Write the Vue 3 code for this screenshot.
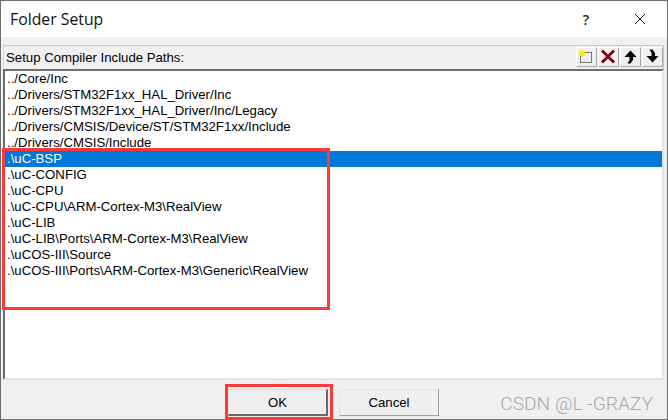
<template>
  <div class="dialog">
    <div class="title-bar">
      <span class="title">Folder Setup</span>
      <span class="help">?</span>
      <svg class="close" width="12" height="12" viewBox="0 0 12 12">
        <path d="M1 1L11 11M11 1L1 11" stroke="#222" stroke-width="1" fill="none" />
      </svg>
    </div>

    <div class="body">
      <div class="group-head">
        <span class="group-label">Setup Compiler Include Paths:</span>
        <div class="tools">
          <button class="tool">
            <svg width="19" height="18" viewBox="0 0 19 18">
              <rect x="3.5" y="4.5" width="11" height="10" fill="none" stroke="#000" stroke-width="1" stroke-dasharray="1 1" />
              <path d="M1.5 5h7M5 1.5v7M2.5 2.5l5 5M7.5 2.5l-5 5" stroke="#f5ee10" stroke-width="1.5" fill="none" />
            </svg>
          </button>
          <button class="tool">
            <svg width="19" height="18" viewBox="0 0 19 18">
              <path d="M3 2.5L15 14.5M15 2.5L3 14.5" stroke="#800000" stroke-width="2.8" fill="none" />
            </svg>
          </button>
          <button class="tool">
            <svg width="19" height="18" viewBox="0 0 19 18">
              <path d="M9.5 2.5L15.5 9H12V12L9.5 15.5H6.5L8.5 12V9H3.5Z" fill="#000" />
            </svg>
          </button>
          <button class="tool">
            <svg width="19" height="18" viewBox="0 0 19 18">
              <path d="M9.5 14.5L15.5 8H12V5L9.5 1.5H6.5L8.5 5V8H3.5Z" fill="#000" />
            </svg>
          </button>
        </div>
      </div>

      <ul class="path-list">
        <li
          v-for="(path, i) in paths"
          :key="path"
          class="path-row"
          :class="{ selected: i === selectedIndex }"
        >{{ path }}</li>
      </ul>

      <div class="footer">
        <button class="btn primary">OK</button>
        <button class="btn">Cancel</button>
      </div>
    </div>

    <span class="watermark">CSDN @L -GRAZY</span>

    <!-- red annotations drawn over the dialog -->
    <div class="mark mark-list"></div>
    <div class="mark mark-ok"></div>
  </div>
</template>

<script setup>
const selectedIndex = 5

const paths = [
  '../Core/Inc',
  '../Drivers/STM32F1xx_HAL_Driver/Inc',
  '../Drivers/STM32F1xx_HAL_Driver/Inc/Legacy',
  '../Drivers/CMSIS/Device/ST/STM32F1xx/Include',
  '../Drivers/CMSIS/Include',
  '.\\uC-BSP',
  '.\\uC-CONFIG',
  '.\\uC-CPU',
  '.\\uC-CPU\\ARM-Cortex-M3\\RealView',
  '.\\uC-LIB',
  '.\\uC-LIB\\Ports\\ARM-Cortex-M3\\RealView',
  '.\\uCOS-III\\Source',
  '.\\uCOS-III\\Ports\\ARM-Cortex-M3\\Generic\\RealView'
]
</script>

<style>
html,
body {
  margin: 0;
  background: #f0f0f0;
}
</style>

<style scoped>
.dialog {
  position: relative;
  box-sizing: border-box;
  width: 668px;
  height: 420px;
  display: flex;
  flex-direction: column;
  border: 1px solid #6e6e6e;
  background: #f0f0f0;
  font-family: "Liberation Sans", Arial, sans-serif;
  font-size: 13.2px;
  color: #000;
}

.title-bar {
  flex: 0 0 36px;
  display: flex;
  align-items: center;
  padding: 0 21px 0 9px;
  background: #fff;
}

.title {
  flex: 1;
  font-family: "Open Sans", "Noto Sans", sans-serif;
  font-size: 15.8px;
  color: #111;
}

.help {
  margin-right: 45px;
  font-family: "Open Sans", sans-serif;
  font-size: 14px;
  font-weight: 600;
  color: #222;
}

.body {
  flex: 1;
  display: flex;
  flex-direction: column;
  padding: 8px 2px 0 2px;
  min-height: 0;
}

.group-head {
  flex: 0 0 24px;
  display: flex;
  align-items: center;
  justify-content: space-between;
  box-sizing: border-box;
  margin-right: 1px;
  padding-left: 2px;
  border-top: 1px solid #c8c8c8;
  border-left: 1px solid #dcdcdc;
  border-right: 1px solid #c8c8c8;
}

.tools {
  display: flex;
  gap: 1px;
  align-self: flex-start;
  margin-top: 1px;
}

.tool {
  width: 21px;
  height: 20px;
  display: flex;
  align-items: center;
  justify-content: center;
  padding: 0;
  background: #f0f0f0;
  border: 1px solid;
  border-color: #fff #a8a8a8 #a8a8a8 #fff;
}

.path-list {
  flex: 0 0 311px;
  box-sizing: border-box;
  margin: 0 1px 0 0;
  padding: 0;
  list-style: none;
  background: #fff;
  border-top: 2px solid #6e6e6e;
  border-left: 2px solid #6e6e6e;
  border-right: 2px solid #e4e4e4;
  border-bottom: 2px solid #e4e4e4;
}

.path-row {
  height: 16px;
  padding-left: 2px;
  line-height: 16px;
  white-space: nowrap;
}

.path-row.selected {
  background: #0078d7;
  color: #fff;
}

.footer {
  flex: 1;
  display: flex;
  gap: 11px;
  padding: 9px 0 0 225px;
}

.btn {
  box-sizing: border-box;
  width: 100px;
  height: 27px;
  padding: 0;
  font-family: "Liberation Sans", Arial, sans-serif;
  font-size: 13.2px;
  color: #000;
  background: #efefef;
  border: 1px solid;
  border-color: #e4e4e4 #a0a0a0 #a0a0a0 #e4e4e4;
}

.btn.primary {
  border-width: 1px 2px 2px 1px;
  border-color: #dcdcdc #696969 #696969 #dcdcdc;
}

.watermark {
  position: absolute;
  right: 14px;
  bottom: 4px;
  font-family: Roboto, sans-serif;
  font-weight: 300;
  font-size: 19.2px;
  color: #a8a8a8;
}

.mark {
  position: absolute;
  box-sizing: border-box;
  border: 3px solid #f93b3b;
}

.mark-list {
  left: 1px;
  top: 147px;
  width: 328px;
  height: 162px;
}

.mark-ok {
  left: 224px;
  top: 383px;
  width: 108px;
  height: 36px;
}
</style>
